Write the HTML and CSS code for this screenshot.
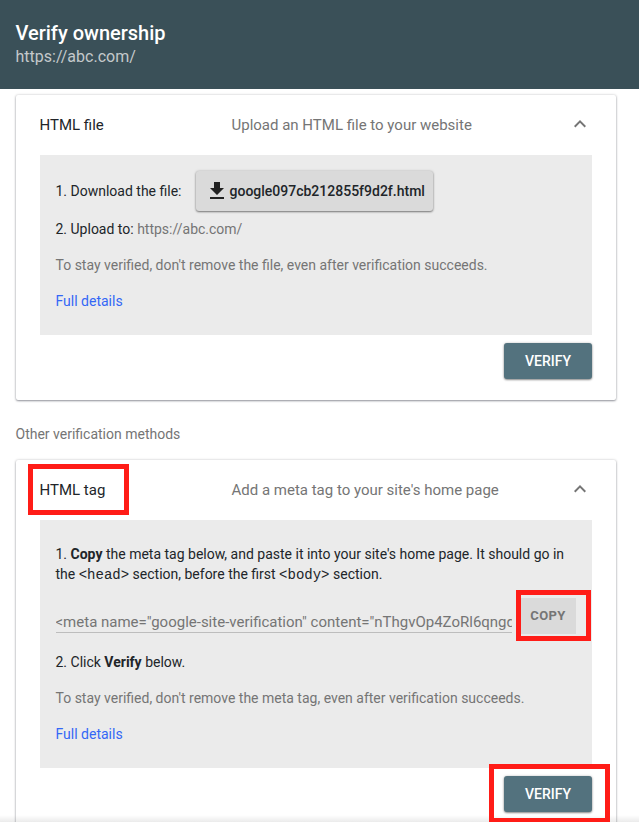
FILE: index.html
```html
<!DOCTYPE html>
<html lang="en">
<head>
<meta charset="utf-8">
<title>Verify ownership</title>
<link rel="stylesheet" href="styles.css">
</head>
<body>
<header class="header">
  <h1 class="title">Verify ownership</h1>
  <div class="site">https://abc.com/</div>
</header>
<main class="main">
  <section class="card">
    <div class="card-head">
      <h2 class="method">HTML file</h2>
      <div class="summary">Upload an HTML file to your website</div>
      <svg class="chevron" viewBox="0 0 24 24"><path d="M12 8l-6 6 1.41 1.41L12 10.83l4.59 4.58L18 14z"/></svg>
    </div>
    <div class="panel">
      <div class="download-row">
        <span>1. Download the file:</span>
        <button class="download"><svg class="download-icon" viewBox="0 0 16 18"><path d="M5 0h6v6h4L8 13 1 6h4zM1 15h14v2H1z"/></svg><span>google097cb212855f9d2f.html</span></button>
      </div>
      <p class="line upload">2. Upload to: <span class="muted">https://abc.com/</span></p>
      <p class="line muted">To stay verified, don't remove the file, even after verification succeeds.</p>
      <p class="line"><a class="link">Full details</a></p>
    </div>
    <div class="actions"><button class="verify">VERIFY</button></div>
  </section>
  <p class="other">Other verification methods</p>
  <section class="card card-tag">
    <div class="card-head">
      <h2 class="method marked mark-tag">HTML tag</h2>
      <div class="summary">Add a meta tag to your site's home page</div>
      <svg class="chevron" viewBox="0 0 24 24"><path d="M12 8l-6 6 1.41 1.41L12 10.83l4.59 4.58L18 14z"/></svg>
    </div>
    <div class="panel panel-tag">
      <p class="line copy-text">1. <b>Copy</b> the meta tag below, and paste it into your site's home page. It should go in<br>the <code>&lt;head&gt;</code> section, before the first <code>&lt;body&gt;</code> section.</p>
      <div class="copy-row">
        <div class="meta-field">&lt;meta name="google-site-verification" content="nThgvOp4ZoRl6qngd</div>
        <div class="marked mark-copy"><button class="copy">COPY</button></div>
      </div>
      <p class="line click">2. Click <b>Verify</b> below.</p>
      <p class="line muted">To stay verified, don't remove the meta tag, even after verification succeeds.</p>
      <p class="line"><a class="link">Full details</a></p>
    </div>
    <div class="actions"><div class="marked mark-verify"><button class="verify">VERIFY</button></div></div>
  </section>
</main>
<div class="bottom-shade"></div>
</body>
</html>
```
FILE: styles.css
```css
*, *::after { box-sizing: border-box; }
html { height: 822px; overflow: hidden; }
body {
  margin: 0;
  height: 822px;
  overflow: hidden;
  background: #fff;
  color: #212529;
  font: 14px/20px Roboto, sans-serif;
}
h1, h2, p { margin: 0; }
button { font-family: inherit; border: 0; padding: 0; }
.header {
  height: 89px;
  padding: 21px 15.5px 0;
  background: #3a5058;
}
.title {
  color: #fff;
  font-size: 20px;
  font-weight: 500;
  line-height: 25px;
}
.site { color: #c4c9cb; font-size: 16px; line-height: 21px; }
.main { padding: 6px 23px 0 16px; }
.card {
  height: 305px;
  border-radius: 2px;
  background: #fff;
  box-shadow: 0 1px 2px rgba(60, 64, 80, .5), 0 0 3px rgba(0, 0, 0, .18);
  padding: 0 24px;
}
.card-tag { height: 373px; }
.card-head {
  display: grid;
  grid-template-columns: 191.5px 1fr 24px;
  align-items: center;
  height: 60px;
  font-size: 15px;
}
.method { font-size: 15px; font-weight: 400; margin-left: -0.5px; }
.summary { color: #757575; }
.chevron { width: 24px; height: 24px; fill: #757575; margin: -2px 0 0 -0.5px; }
.panel { height: 180px; padding: 16px 16px 16px 15.5px; background: #ebebeb; }
.download-row { display: flex; align-items: center; gap: 14.5px; height: 40px; }
.download {
  display: flex;
  align-items: center;
  gap: 4.5px;
  width: 237px;
  height: 40px;
  padding-left: 13px;
  border-radius: 3px;
  background: #dadada;
  color: #212529;
  font-size: 14px;
  font-weight: 500;
  box-shadow: 0 1px 2px rgba(0, 0, 0, .45), 0 0 3px rgba(0, 0, 0, .18);
}
.download-icon { width: 16px; height: 18px; fill: #212121; }
.line + .line { margin-top: 16px; }
.upload { margin-top: 8px; }
.muted { color: #757575; }
.link { color: #3367f6; }
.actions { display: flex; justify-content: flex-end; padding-top: 8px; }
.verify {
  display: block;
  width: 88px;
  height: 36px;
  border-radius: 3px;
  background: #53727e;
  color: #fff;
  font-size: 14px;
  font-weight: 500;
  box-shadow: 0 1px 2px rgba(0, 0, 0, .4), 0 0 3px rgba(0, 0, 0, .18);
}
.other { margin: 24px 0 16px -0.5px; color: #757575; }
.panel-tag { height: 248px; padding-top: 24px; }
.copy-text { white-space: nowrap; }
b { font-weight: 700; }
code { font: 14px/1 "Liberation Mono", monospace; }
.copy-row { display: flex; height: 36px; margin-top: 14px; }
.meta-field {
  width: 456.5px;
  height: 35px;
  padding-top: 14px;
  overflow: hidden;
  white-space: nowrap;
  border-bottom: 1px solid #bdbdbd;
  color: #757575;
  font-size: 15px;
}
.copy {
  display: block;
  width: 56px;
  height: 36px;
  padding-bottom: 2px;
  background: #dadada;
  color: #757575;
  font-size: 13px;
  font-weight: 700;
  letter-spacing: 0.4px;
}
.click { margin-top: 18px; }
.marked { position: relative; }
.marked::after { content: ""; position: absolute; border: 5px solid #ff1c17; }
.mark-tag::after { left: -11.5px; top: -16px; width: 101px; height: 51px; }
.mark-copy { margin-left: 8px; }
.mark-copy::after { left: -4px; top: -8px; width: 75px; height: 51px; }
.mark-verify { z-index: 2; }
.mark-verify::after { left: -15px; top: -12px; width: 121px; height: 59px; }
.bottom-shade {
  position: absolute;
  left: 0;
  right: 0;
  top: 815px;
  height: 7px;
  background: linear-gradient(rgba(0, 0, 0, 0), rgba(0, 0, 0, .08));
}
```
